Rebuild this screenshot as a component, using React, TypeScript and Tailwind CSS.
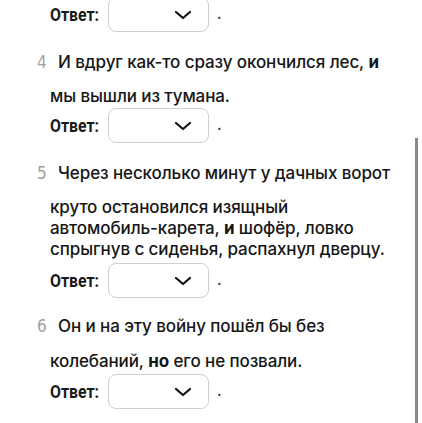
import React from 'react';

const Chevron = () => (
  <svg width="18" height="10" viewBox="0 0 18 10" fill="none">
    <path d="M2 2l7 6 7-6" stroke="#111" strokeWidth="2.2" strokeLinecap="round" strokeLinejoin="round" />
  </svg>
);

const AnswerRow: React.FC<{ className?: string }> = ({ className = '' }) => (
  <div className={`flex items-center h-[35px] ${className}`}>
    <span className="w-[58px] whitespace-nowrap">
      <span className="inline-block origin-left scale-x-[0.88] font-['Roboto'] font-bold text-[18px] text-[#1a1a1a] tracking-normal">
        Ответ:
      </span>
    </span>
    <div className="w-[101px] h-[35px] border border-[#cfcfcf] rounded-[8px] bg-white flex items-center justify-end pr-[16px]">
      <Chevron />
    </div>
    <span className="ml-[8px] text-[#333] text-[15px]">.</span>
  </div>
);

interface ItemProps {
  num: number;
  first: React.ReactNode;
  rest: React.ReactNode;
  className?: string;
  restGap?: string;
  answerGap?: string;
}

const Item: React.FC<ItemProps> = ({
  num,
  first,
  rest,
  className = '',
  restGap = 'mt-[13px]',
  answerGap = 'mt-[3px]',
}) => (
  <div className={className}>
    <div className="flex items-baseline -ml-[13px] h-[21px] leading-[21px]">
      <span className="w-[21px] text-[#a0a0a0] font-['DejaVu_Sans'] font-normal [font-stretch:condensed] text-[17px]">{num}</span>
      <span>{first}</span>
    </div>
    <div className={`${restGap} leading-[21px]`}>{rest}</div>
    <AnswerRow className={answerGap} />
  </div>
);

export default function App() {
  return (
    <div className="relative w-[422px] h-[423px] overflow-hidden bg-white font-['Inter'] font-medium tracking-[-0.1px] text-[17px] text-[#161616]">
      <div className="pl-[50px] -mt-[3px]">
        <AnswerRow />
        <Item
          className="mt-[20px]"
          answerGap="mt-[1px]"
          num={4}
          first={<>И вдруг как-то сразу окончился лес, <b>и</b></>}
          rest={<>мы вышли из тумана.</>}
        />
        <Item
          className="mt-[20px]"
          num={5}
          first={<>Через несколько минут у дачных ворот</>}
          rest={
            <>
              круто остановился изящный
              <br />
              автомобиль-карета, <b>и</b> шофёр, ловко
              <br />
              спрыгнув с сиденья, распахнул дверцу.
            </>
          }
        />
        <Item
          className="mt-[18px]"
          restGap="mt-[14px]"
          answerGap="mt-[2px]"
          num={6}
          first={<>Он и на эту войну пошёл бы без</>}
          rest={<>колебаний, <b>но</b> его не позвали.</>}
        />
      </div>
      <div className="absolute left-[415px] top-[138px] w-[3px] h-[300px] bg-[#8a8a8a]" />
    </div>
  );
}
